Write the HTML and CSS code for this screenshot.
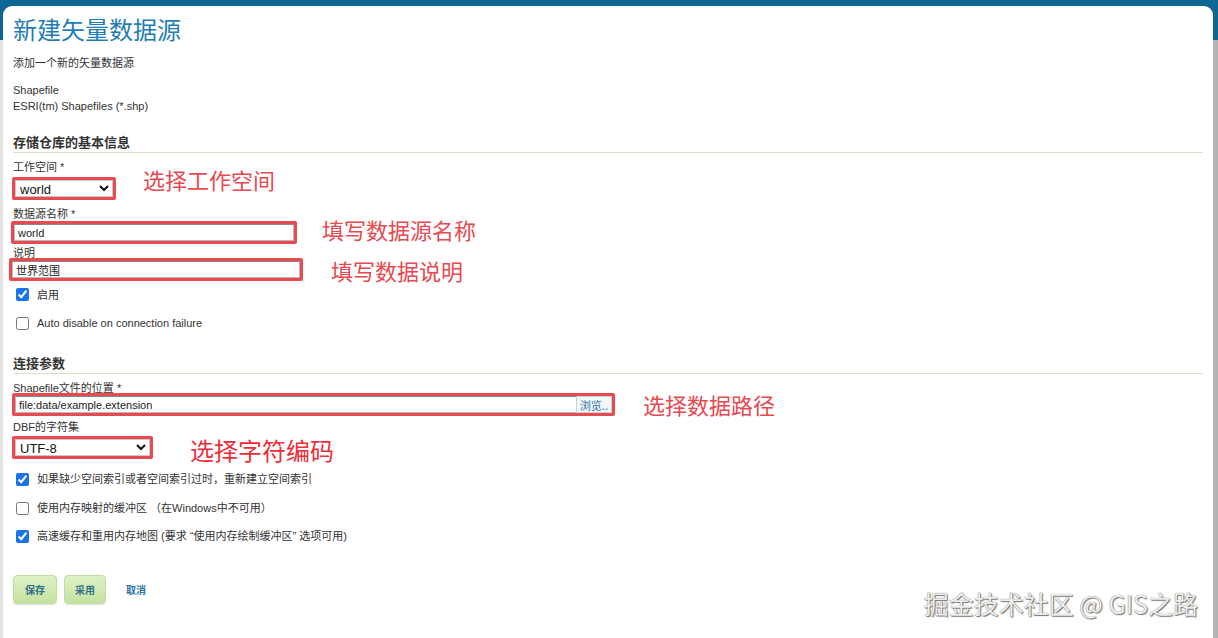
FILE: index.html
```html
<!DOCTYPE html>
<html lang="zh">
<head>
<meta charset="utf-8">
<title>新建矢量数据源</title>
<link rel="stylesheet" href="styles.css">
</head>
<body>
<div class="page">
  <div class="card">
    <h1 class="title">新建矢量数据源</h1>
    <p class="subtitle">添加一个新的矢量数据源</p>
    <div class="type">
      <div>Shapefile</div>
      <div>ESRI(tm) Shapefiles (*.shp)</div>
    </div>

    <h2 class="section">存储仓库的基本信息</h2>
    <div class="label l-ws">工作空间 *</div>
    <div class="row r-ws">
      <span class="hl hl-ws"><select class="sel sel-ws"><option>world</option></select></span>
      <span class="note note-ws">选择工作空间</span>
    </div>
    <div class="label l-name">数据源名称 *</div>
    <div class="row r-name">
      <span class="hl hl-name"><input class="txt txt-name" type="text" value="world"></span>
      <span class="note note-name">填写数据源名称</span>
    </div>
    <div class="label l-desc">说明</div>
    <div class="row r-desc">
      <span class="hl hl-desc"><input class="txt txt-desc" type="text" value="世界范围"></span>
      <span class="note note-desc">填写数据说明</span>
    </div>
    <label class="check c-enabled"><input type="checkbox" checked><span>启用</span></label>
    <label class="check c-auto"><input type="checkbox"><span>Auto disable on connection failure</span></label>

    <h2 class="section section-2">连接参数</h2>
    <div class="label l-file">Shapefile文件的位置 *</div>
    <div class="row r-file">
      <span class="hl hl-file"><span class="filebox"><input class="txt txt-file" type="text" value="file:data/example.extension"><span class="browse">浏览..</span></span></span>
      <span class="note note-file">选择数据路径</span>
    </div>
    <div class="label l-cs">DBF的字符集</div>
    <div class="row r-cs">
      <span class="hl hl-cs"><select class="sel sel-cs"><option>UTF-8</option></select></span>
      <span class="note note-cs">选择字符编码</span>
    </div>
    <label class="check c-idx"><input type="checkbox" checked><span>如果缺少空间索引或者空间索引过时，重新建立空间索引</span></label>
    <label class="check c-mem"><input type="checkbox"><span>使用内存映射的缓冲区 （在Windows中不可用）</span></label>
    <label class="check c-cache"><input type="checkbox" checked><span>高速缓存和重用内存地图 (要求 “使用内存绘制缓冲区” 选项可用)</span></label>

    <div class="actions">
      <button class="btn" type="button">保存</button>
      <button class="btn btn-2" type="button">采用</button>
      <a class="cancel" href="#">取消</a>
    </div>
  </div>
  <div class="watermark">掘金技术社区 @ GIS之路</div>
</div>
</body>
</html>
```

FILE: styles.css
```css
html, body {
  margin: 0;
  padding: 0;
  height: 100%;
  background: #fff;
}
body {
  font-family: "Liberation Sans", Arial, "Noto Sans CJK SC", sans-serif;
  font-size: 11px;
  color: #333;
}
.page {
  position: relative;
  height: 638px;
  box-sizing: border-box;
  padding: 6px 5px 0 3px;
  background:
    linear-gradient(to bottom, #0e6793 0, #0e6793 40px, transparent 40px),
    linear-gradient(to right, #e4e4e4 0, #e4e4e4 3px, #fff 3px, #fff calc(100% - 5px), #b4b4b4 calc(100% - 5px));
  overflow: hidden;
}
.card {
  background: #fff;
  height: 100%;
  border-radius: 9px 9px 0 0;
  padding: 8px 10px 0 10px;
  box-sizing: border-box;
}
.title {
  margin: 0;
  font-family: "Noto Sans CJK SC", sans-serif;
  font-weight: normal;
  font-size: 24px;
  line-height: 30px;
  color: #1f7db6;
}
.subtitle {
  margin: 11px 0 0;
  line-height: 16px;
}
.type {
  margin-top: 11px;
  line-height: 16px;
}
.section {
  margin: 21px 0 0;
  font-size: 13px;
  font-weight: bold;
  line-height: 16px;
  color: #333;
  border-bottom: 1px solid #dde0c6;
  padding-bottom: 1px;
}
.section-2 {
  margin-top: 26px;
}
.label {
  line-height: 14px;
}
.l-ws { margin-top: 7px; }
.l-name { margin-top: 7px; }
.l-desc { margin-top: 3px; line-height: 12px; }
.l-file { margin-top: 7px; }
.l-cs { margin-top: 4px; }

.row {
  display: flex;
  align-items: center;
  height: 23px;
}
.r-ws { margin-top: 3px; }
.r-name { margin-top: 0; }
.r-desc { margin-top: -1px; }
.r-file { margin-top: -2px; }
.r-cs { margin-top: 2px; }

.hl {
  display: inline-flex;
  border: 3px solid #e84a50;
  border-radius: 2px;
  box-sizing: border-box;
  height: 23px;
}
.hl-ws { width: 104px; margin-left: -1px; }
.hl-name { width: 286px; margin-left: -2px; }
.hl-desc { width: 294px; margin-left: -4px; }
.hl-file { width: 603px; margin-left: -1px; }
.hl-cs { width: 141px; margin-left: -1px; }

.sel {
  width: 100%;
  height: 17px;
  font-family: "Liberation Sans", Arial, sans-serif;
  font-size: 13px;
  color: #111;
  border: 1px solid #c8c8c8;
  border-radius: 0;
  background: #fff;
  padding: 0;
  margin: 0;
}
.txt {
  width: 100%;
  height: 17px;
  box-sizing: border-box;
  margin: 0;
  padding: 0 3px;
  font-family: "Liberation Sans", Arial, "Noto Sans CJK SC", sans-serif;
  font-size: 11px;
  color: #222;
  border: 1px solid #b8b8b8;
  border-top-color: #888;
  background: #fff;
  outline: none;
}
.filebox {
  display: flex;
  width: 100%;
}
.filebox .txt {
  flex: 1;
  border-right: none;
}
.browse {
  display: inline-flex;
  align-items: center;
  padding: 0 3px;
  height: 17px;
  box-sizing: border-box;
  font-family: "Noto Sans CJK SC", sans-serif;
  font-size: 11px;
  color: #2a74a8;
  background: #f3f7fa;
  border: 1px solid #c8d4dc;
}
.note {
  font-family: "Noto Sans CJK SC", sans-serif;
  font-size: 22px;
  line-height: 22px;
  color: #e8484f;
}
.note-ws { margin: -20px 0 0 27px; }
.note-name { margin: -8px 0 0 25px; }
.note-desc { margin-left: 28px; }
.note-file { margin: -2px 0 0 28px; }
.note-cs { margin: 0 0 -4px 37px; font-size: 24px; color: #ee2d38; }

.check {
  display: flex;
  align-items: center;
  line-height: 14px;
  height: 14px;
}
.check input {
  width: 13px;
  height: 13px;
  margin: 0 8px 0 3px;
  accent-color: #1a73e8;
}
.c-enabled { margin-top: 6px; }
.c-enabled span { margin-top: 2px; }
.c-auto { margin-top: 15px; }
.c-idx { margin-top: 13px; }
.c-mem { margin-top: 15px; }
.c-cache { margin-top: 14px; }

.actions {
  display: flex;
  align-items: center;
  margin-top: 32px;
}
.btn {
  width: 44px;
  height: 29px;
  padding: 0;
  border: 1px solid #c2dca6;
  border-radius: 4px;
  background: linear-gradient(to bottom, #dff0c6 0, #c4e29e 100%);
  font-family: "Noto Sans CJK SC", sans-serif;
  font-size: 10px;
  font-weight: bold;
  color: #2f6f8c;
  box-shadow: 0 1px 1px rgba(0,0,0,0.12);
}
.btn-2 {
  width: 42px;
  margin-left: 7px;
}
.cancel {
  margin-left: 20px;
  font-family: "Noto Sans CJK SC", sans-serif;
  font-size: 10px;
  font-weight: bold;
  color: #2a74a8;
  text-decoration: none;
}
.watermark {
  position: absolute;
  right: 20px;
  bottom: 21px;
  font-family: "Noto Sans CJK SC", sans-serif;
  font-size: 25px;
  line-height: 28px;
  color: #efefef;
  text-shadow: 0 0 1px #555, 1px 1px 1px #777;
}
```
